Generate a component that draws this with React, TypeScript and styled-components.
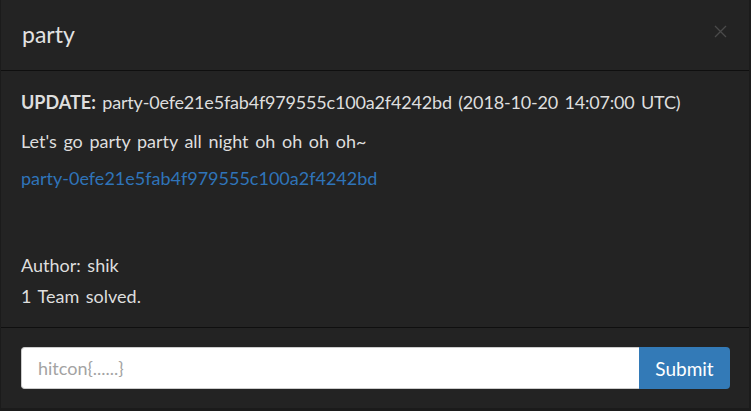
import React from "react";
import styled, { createGlobalStyle } from "styled-components";

const Global = createGlobalStyle`
  html, body { margin: 0; padding: 0; background: #1b1b1b; }
  body { font-family: Lato, "Open Sans", sans-serif; }
  * { box-sizing: border-box; }
`;

const Modal = styled.div`
  width: 748px;
  height: 408px;
  margin-left: 1px;
  background: #232323;
  color: #dedede;
  font-size: 18px;
  line-height: 24px;
  word-spacing: 2px;
  display: flex;
  flex-direction: column;
`;

const Header = styled.div`
  height: 71px;
  padding: 0 20px 0 21px;
  border-bottom: 1px solid #0f0f0f;
  display: flex;
  align-items: center;
  justify-content: space-between;
`;

const Title = styled.h4`
  margin: 0;
  font-size: 23px;
  font-weight: 400;
  color: #e2e2e2;
  padding-bottom: 2px;
`;

const Close = styled.button`
  border: 0;
  background: none;
  padding: 0;
  margin-right: 2px;
  margin-bottom: 7px;
  width: 14px;
  height: 14px;
  display: flex;
  align-items: center;
  justify-content: center;
  cursor: pointer;
`;

const Body = styled.div`
  padding: 19px 20px 0 20px;
  display: flex;
  flex-direction: column;
  border-bottom: 1px solid #0f0f0f;
  height: 257px;
`;

const Line = styled.p<{ $gap?: number; $tight?: boolean }>`
  margin: 0;
  margin-top: ${(p) => p.$gap ?? 0}px;
  white-space: nowrap;
  letter-spacing: ${(p) => (p.$tight ? "-0.18px" : "normal")};
`;

const Strong = styled.strong`
  font-weight: 700;
  letter-spacing: normal;
`;

const Link = styled.a`
  color: #2f74b9;
  text-decoration: none;
`;

const Footer = styled.div`
  padding: 19px 19px 0 20px;
  display: flex;
`;

const Input = styled.input`
  flex: 1;
  height: 42px;
  border: 1px solid #cccccc;
  border-right: 0;
  border-radius: 4px 0 0 4px;
  background: #ffffff;
  padding: 0 16px;
  font-family: Lato, sans-serif;
  font-size: 18px;
  color: #333;
  outline: none;
  &::placeholder { color: #a3a3a3; }
`;

const Submit = styled.button`
  width: 91px;
  height: 42px;
  border: 0;
  border-radius: 0 4px 4px 0;
  background: #337ab7;
  color: #ffffff;
  font-family: Lato, sans-serif;
  font-size: 19px;
  cursor: pointer;
`;

export default function App() {
  return (
    <>
      <Global />
      <Modal>
        <Header>
          <Title>party</Title>
          <Close aria-label="Close">
            <svg width="13" height="13" viewBox="0 0 13 13">
              <path d="M1 1 L12 12 M12 1 L1 12" stroke="#4a4a4a" strokeWidth="1.3" fill="none" />
            </svg>
          </Close>
        </Header>
        <Body>
          <Line $tight>
            <Strong>UPDATE:</Strong> party-0efe21e5fab4f979555c100a2f4242bd (2018-10-20 14:07:00 UTC)
          </Line>
          <Line $gap={15}>Let's go party party all night oh oh oh oh~</Line>
          <Line $gap={13}>
            <Link href="#">party-0efe21e5fab4f979555c100a2f4242bd</Link>
          </Line>
          <Line $gap={63}>Author: shik</Line>
          <Line $gap={7}>1 Team solved.</Line>
        </Body>
        <Footer>
          <Input placeholder="hitcon{......}" />
          <Submit>Submit</Submit>
        </Footer>
      </Modal>
    </>
  );
}
